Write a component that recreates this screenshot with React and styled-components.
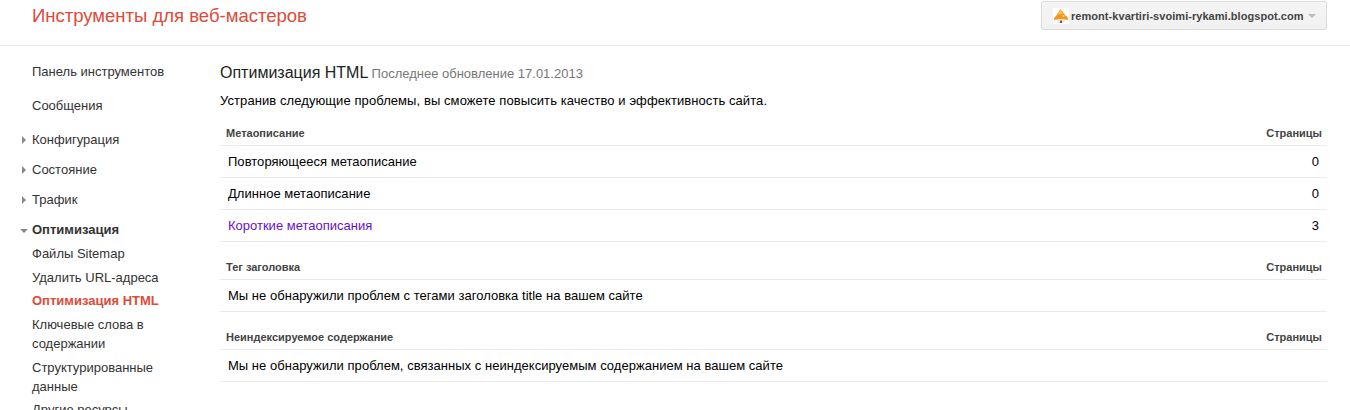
import React from "react";
import styled, { createGlobalStyle } from "styled-components";

const Global = createGlobalStyle`
  html, body { margin: 0; padding: 0; background: #fff; height: 410px; overflow: hidden; }
  body { font-family: "Liberation Sans", Arial, sans-serif; font-size: 13px; color: #222; }
`;
const Header = styled.header`
  height: 45px; border-bottom: 1px solid #ebebeb; display: flex; justify-content: space-between;
  padding: 0 23px 0 32px; box-sizing: content-box;
`;
const Brand = styled.div`
  font-size: 18.5px; line-height: 32px; color: #dd4b39;
`;
const SiteButton = styled.div`
  margin-top: 1px; width: 286px; height: 29px; box-sizing: border-box; border: 1px solid #dcdcdc; border-radius: 2px;
  background: linear-gradient(#f5f5f5, #f1f1f1); display: flex; align-items: center; padding-left: 11px;
  font-size: 11px; font-weight: bold; color: #444; white-space: nowrap; letter-spacing: 0.05px;
`;
const SiteIcon = styled.svg`width: 16px; height: 16px; margin-right: 2px; flex: none;`;
const Caret = styled.span`
  margin-left: 4px; width: 0; height: 0; border: 4px solid transparent; border-top-color: #bbb; border-bottom: 0;
`;
const Body = styled.div`display: flex;`;
const Side = styled.nav`width: 220px; flex: none; height: 364px; overflow: hidden; padding-top: 9px; box-sizing: border-box;`;
const NavTop = styled.div`
  height: 34px; line-height: 34px; padding-left: 32px; color: #333;
`;
const NavGroup = styled.div`margin-top: 2px;`;
const NavSec = styled.div`
  position: relative; height: 30px; line-height: 30px; padding-left: 32px; color: #333;
  font-weight: ${p => (p.$open ? "bold" : "normal")};
`;
const ArrowRight = styled.span`
  position: absolute; left: 22px; top: 11px; width: 0; height: 0;
  border-left: 4px solid #888; border-top: 4px solid transparent; border-bottom: 4px solid transparent;
`;
const ArrowDown = styled.span`
  position: absolute; left: 20px; top: 14px; width: 0; height: 0;
  border-top: 4px solid #888; border-left: 4px solid transparent; border-right: 4px solid transparent;
`;
const NavList = styled.div`margin-top: -3.4px;`;
const NavItem = styled.div`
  padding: 2.33px 40px 2.33px 32px; line-height: 19px; color: ${p => (p.$active ? "#dd4b39" : "#333")};
  font-weight: ${p => (p.$active ? "bold" : "normal")};
`;
const Main = styled.main`flex: 1; padding: 0 23px 0 0;`;
const Title = styled.div`margin-top: 16px; line-height: 22px; font-size: 16px; color: #222;`;
const Updated = styled.span`font-size: 13px; color: #777; margin-left: -0.6px;`;
const Intro = styled.p`margin: 7px 0 10px; line-height: 18px; color: #000; letter-spacing: 0.08px;`;
const Table = styled.div`margin-bottom: 12px;`;
const HeadRow = styled.div`
  display: flex; justify-content: space-between; height: 25px; line-height: 26px; padding: 0 5px 0 6px;
  border-bottom: 1px solid #ebebeb; font-size: 11px; font-weight: bold; color: #444;
`;
const Row = styled.div`
  display: flex; justify-content: space-between; height: 31px; line-height: 31px; padding: 0 8px;
  border-bottom: 1px solid #ebebeb; color: #000; letter-spacing: 0.03px;
`;
const Visited = styled.span`color: #6611cc; letter-spacing: 0;`;

export default function App() {
  return (
    <>
      <Global />
      <Header>
        <Brand>Инструменты для веб-мастеров</Brand>
        <SiteButton>
          <SiteIcon viewBox="0 0 16 16">
            <rect width="16" height="16" fill="#fff" />
            <path d="M7.5 1 L12 7 Q15.5 9.5 15 12 Q8 10.5 1 12 Q.5 9.5 3 8 Z" fill="#f7941d" />
            <path d="M7.5 1 L10 6 Q7 5.5 4.5 7 Z" fill="#fbbf5a" />
            <circle cx="10.5" cy="8" r="1" fill="#ffe9a8" />
            <path d="M4.5 11.5 H11.5 V15 H4.5 Z" fill="#f1e6d2" />
            <path d="M7 12.5 H9 V15 H7 Z" fill="#7a5a3a" />
          </SiteIcon>
          remont-kvartiri-svoimi-rykami.blogspot.com
          <Caret />
        </SiteButton>
      </Header>
      <Body>
        <Side>
          <NavTop>Панель инструментов</NavTop>
          <NavTop>Сообщения</NavTop>
          <NavGroup>
            <NavSec><ArrowRight />Конфигурация</NavSec>
            <NavSec><ArrowRight />Состояние</NavSec>
            <NavSec><ArrowRight />Трафик</NavSec>
            <NavSec $open><ArrowDown />Оптимизация</NavSec>
          </NavGroup>
          <NavList>
            <NavItem>Файлы Sitemap</NavItem>
            <NavItem>Удалить URL-адреса</NavItem>
            <NavItem $active>Оптимизация HTML</NavItem>
            <NavItem>Ключевые слова в содержании</NavItem>
            <NavItem>Структурированные данные</NavItem>
            <NavItem>Другие ресурсы</NavItem>
          </NavList>
        </Side>
        <Main>
          <Title>Оптимизация HTML <Updated>Последнее обновление 17.01.2013</Updated></Title>
          <Intro>Устранив следующие проблемы, вы сможете повысить качество и эффективность сайта.</Intro>
          <Table>
            <HeadRow><span>Метаописание</span><span>Страницы</span></HeadRow>
            <Row><span>Повторяющееся метаописание</span><span>0</span></Row>
            <Row><span>Длинное метаописание</span><span>0</span></Row>
            <Row><Visited>Короткие метаописания</Visited><span>3</span></Row>
          </Table>
          <Table>
            <HeadRow><span>Тег заголовка</span><span>Страницы</span></HeadRow>
            <Row><span>Мы не обнаружили проблем с тегами заголовка title на вашем сайте</span></Row>
          </Table>
          <Table>
            <HeadRow><span>Неиндексируемое содержание</span><span>Страницы</span></HeadRow>
            <Row><span>Мы не обнаружили проблем, связанных с неиндексируемым содержанием на вашем сайте</span></Row>
          </Table>
        </Main>
      </Body>
    </>
  );
}
